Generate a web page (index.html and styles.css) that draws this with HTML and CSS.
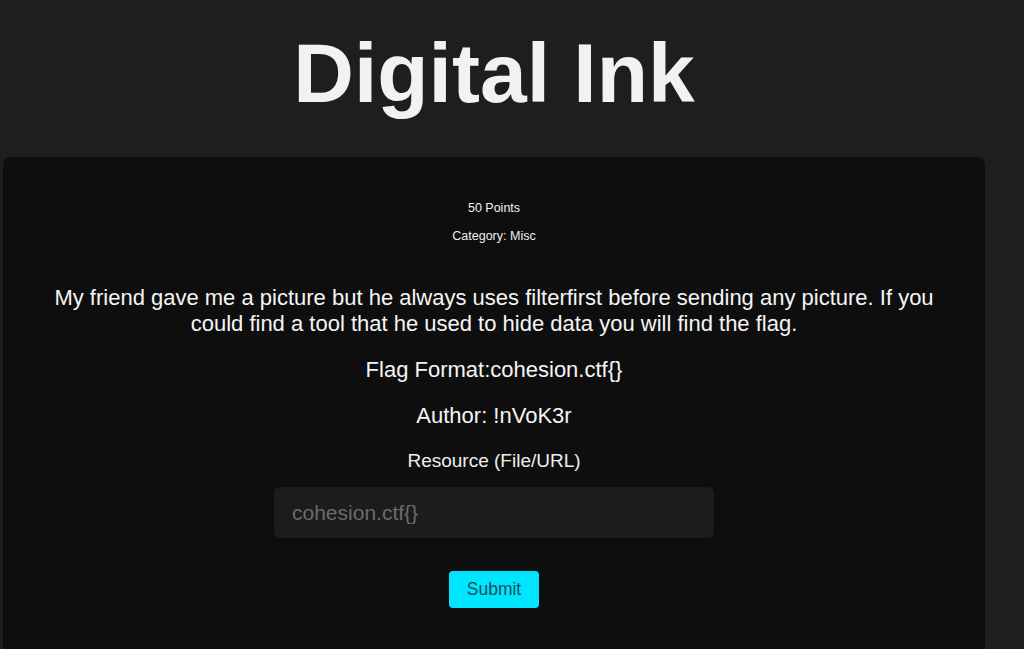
FILE: index.html
```html
<!DOCTYPE html>
<html lang="en">
<head>
    <meta charset="UTF-8">
    <meta name="viewport" content="width=device-width, initial-scale=1.0">
    <title>Digital Ink</title>
    <link rel="stylesheet" href="styles.css">
</head>
<body>
    <div class="page">
        <h1 class="title">Digital Ink</h1>

        <div class="challenge-card">
            <p class="meta">50 Points</p>
            <p class="meta meta-category">Category: Misc</p>

            <p class="description">My friend gave me a picture but he always uses filterfirst before sending any picture. If you could find a tool that he used to hide data you will find the flag.</p>
            <p class="info">Flag Format:cohesion.ctf{}</p>
            <p class="info">Author: !nVoK3r</p>

            <form class="flag-form">
                <label class="resource-label" for="flag">Resource (File/URL)</label>
                <input type="text" id="flag" name="flag" placeholder="cohesion.ctf{}">
                <button type="submit">Submit</button>
            </form>
        </div>
    </div>
</body>
</html>
```

FILE: styles.css
```css
body {
    margin: 0;
    padding: 0;
    font-family: "Liberation Sans", Arial, sans-serif;
    background-color: #1e1e1e;
    color: #f2f2f2;
    height: 649px;
    overflow: hidden;
}

.page {
    width: 982px;
    margin-left: 3px;
}

.title {
    margin: 25px 0 35px;
    text-align: center;
    font-size: 84px;
    font-weight: bold;
    color: #f2f2f2;
}

.challenge-card {
    background-color: #0e0e0e;
    border-radius: 8px;
    padding: 44px 30px 60px;
    text-align: center;
}

.meta {
    margin: 0;
    font-size: 12.5px;
    color: #f0f0f0;
}

.meta-category {
    margin-top: 14px;
}

.description {
    margin: 42px 0 0;
    font-size: 22px;
    color: #f5f5f5;
}

.info {
    margin: 20px 0 0;
    font-size: 22px;
    color: #f5f5f5;
}

.flag-form {
    display: flex;
    flex-direction: column;
    align-items: center;
    margin-top: 21px;
}

.resource-label {
    font-size: 19px;
    color: #eeeeee;
}

.flag-form input {
    box-sizing: border-box;
    width: 440px;
    height: 51px;
    margin-top: 15px;
    padding: 0 18px;
    background-color: #1c1c1c;
    border: none;
    border-radius: 6px;
    outline: none;
    color: #ddd;
    font-family: inherit;
    font-size: 21px;
}

.flag-form input::placeholder {
    color: #6b6b6b;
}

.flag-form button {
    margin-top: 33px;
    width: 90px;
    height: 37px;
    background-color: #00e5ff;
    color: #154d58;
    border: none;
    border-radius: 4px;
    font-family: inherit;
    font-size: 17.5px;
    cursor: pointer;
}
```
